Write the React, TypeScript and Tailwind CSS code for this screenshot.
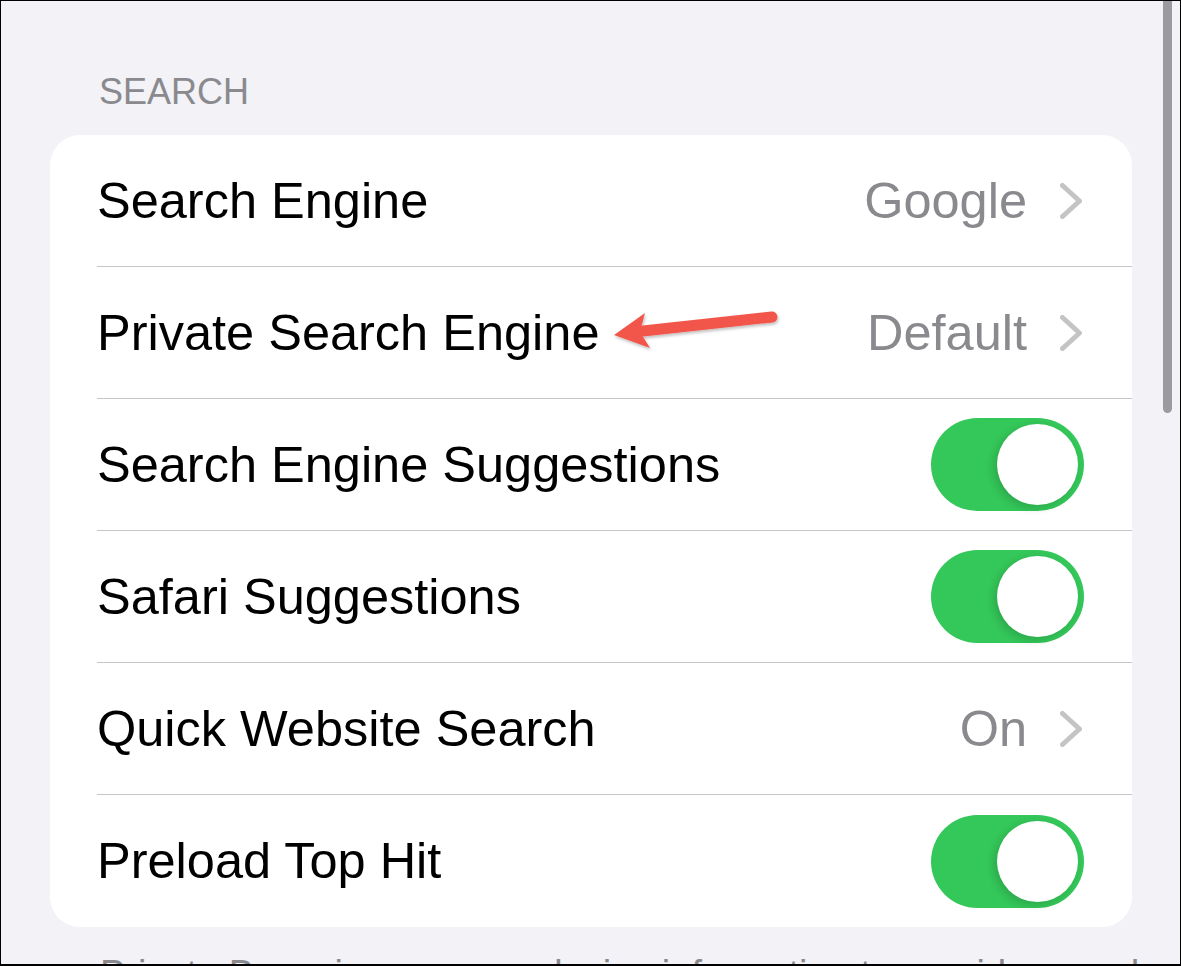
type Row = {
  label: string;
  value?: string;
  toggle?: boolean;
};

const rows: Row[] = [
  { label: "Search Engine", value: "Google" },
  { label: "Private Search Engine", value: "Default" },
  { label: "Search Engine Suggestions", toggle: true },
  { label: "Safari Suggestions", toggle: true },
  { label: "Quick Website Search", value: "On" },
  { label: "Preload Top Hit", toggle: true },
];

const Chevron = () => (
  <svg width="22" height="36" viewBox="0 0 22 36" fill="none">
    <path
      d="M2.5 2.5 L19.5 18 L2.5 33.5"
      stroke="#c4c4c7"
      strokeWidth="5"
      strokeLinecap="round"
      strokeLinejoin="round"
    />
  </svg>
);

const Toggle = () => (
  <div className="flex h-[93px] w-[153px] items-center justify-end rounded-full bg-[#34c759] pr-[6px]">
    <div className="h-[81px] w-[81px] rounded-full bg-white shadow-[-3px_3px_9px_rgba(0,0,0,0.16)]" />
  </div>
);

const App = () => {
  return (
    <div
      className="relative h-[966px] w-[1181px] overflow-hidden border border-b-2 border-black bg-[#f2f2f7]"
      style={{ fontFamily: '"Liberation Sans", Arial, sans-serif' }}
    >
      {/* scroll indicator */}
      <div className="absolute left-[1162px] top-0 h-[412px] w-[9px] rounded-b-full bg-[#9b9b9f]" />

      <div className="pl-[49px] pt-[73px]">
        <div className="pl-[49px] text-[36px] leading-[36px] text-[#8a8a8e]">SEARCH</div>

        <div className="mt-[25px] w-[1082px] overflow-hidden rounded-[30px] bg-white">
          {rows.map((row, i) => (
            <div key={row.label} className="pl-[47px]">
              <div
                className={
                  "flex h-[132px] items-center justify-between pr-[48px] " +
                  (i < rows.length - 1 ? "border-b border-[#c6c6c8]" : "")
                }
              >
                <span className="text-[50.5px] leading-[60px] text-black">{row.label}</span>
                {row.toggle ? (
                  <Toggle />
                ) : (
                  <div className="flex items-center gap-[33px] pr-[2px]">
                    <span className="text-[50.5px] leading-[60px] text-[#8a8a8e]">{row.value}</span>
                    <Chevron />
                  </div>
                )}
              </div>
            </div>
          ))}
        </div>

        <div className="mt-[25px] whitespace-nowrap pl-[50px] text-[38px] leading-[44px] text-[#8a8a8e]">
          Private Browsing uses on-device information to provide search suggestions
        </div>
      </div>

      {/* annotation arrow */}
      <svg
        className="pointer-events-none absolute left-0 top-0"
        width="1181"
        height="966"
        viewBox="0 0 1181 966"
      >
        <defs>
          <filter id="sh" x="-10%" y="-30%" width="120%" height="160%">
            <feDropShadow dx="1" dy="2" stdDeviation="1.5" floodColor="#000" floodOpacity="0.25" />
          </filter>
        </defs>
        <g filter="url(#sh)" fill="#f2574b">
          <path d="M771 316 L642 330" stroke="#f2574b" strokeWidth="11" strokeLinecap="round" />
          <path d="M613 334 L644 312 L639 331 L649 347 Z" />
        </g>
      </svg>
    </div>
  );
};

export default App;
